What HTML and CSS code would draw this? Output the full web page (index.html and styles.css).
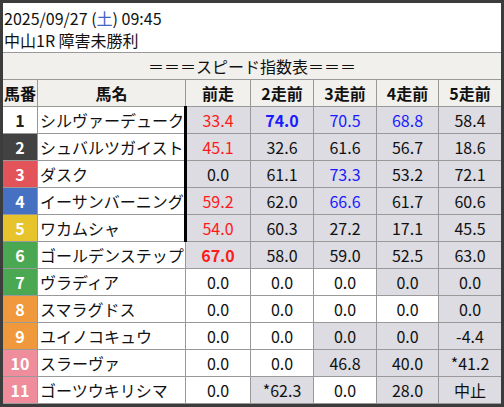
FILE: index.html
```html
<!DOCTYPE html>
<html lang="ja">
<head>
<meta charset="utf-8">
<link rel="stylesheet" href="styles.css">
</head>
<body>
<div class="frame">
  <div class="info">
    <div class="info-line">2025/09/27 (<span class="sat">土</span>) 09:45</div>
    <div class="info-line">中山1R 障害未勝利</div>
  </div>
  <div class="band">＝＝＝スピード指数表＝＝＝</div>
  <div class="grid">
    <div class="hd">馬番</div><div class="hd">馬名</div><div class="hd">前走</div><div class="hd">2走前</div><div class="hd">3走前</div><div class="hd">4走前</div><div class="hd">5走前</div>

    <div class="num n1">1</div><div class="name mark">シルヴァーデューク</div><div class="v g red">33.4</div><div class="v g blue b">74.0</div><div class="v g blue">70.5</div><div class="v g blue">68.8</div><div class="v g">58.4</div>

    <div class="num n2">2</div><div class="name mark">シュバルツガイスト</div><div class="v g red">45.1</div><div class="v g">32.6</div><div class="v g">61.6</div><div class="v g">56.7</div><div class="v g">18.6</div>

    <div class="num n3">3</div><div class="name mark">ダスク</div><div class="v g">0.0</div><div class="v g">61.1</div><div class="v g blue">73.3</div><div class="v g">53.2</div><div class="v g">72.1</div>

    <div class="num n4">4</div><div class="name mark">イーサンバーニング</div><div class="v g red">59.2</div><div class="v g">62.0</div><div class="v g blue">66.6</div><div class="v g">61.7</div><div class="v g">60.6</div>

    <div class="num n5">5</div><div class="name mark last">ワカムシャ</div><div class="v g red">54.0</div><div class="v g">60.3</div><div class="v g">27.2</div><div class="v g">17.1</div><div class="v g">45.5</div>

    <div class="num n6">6</div><div class="name">ゴールデンステップ</div><div class="v g red b">67.0</div><div class="v g">58.0</div><div class="v g">59.0</div><div class="v g">52.5</div><div class="v g">63.0</div>

    <div class="num n7">7</div><div class="name">ヴラディア</div><div class="v">0.0</div><div class="v">0.0</div><div class="v">0.0</div><div class="v g">0.0</div><div class="v g">0.0</div>

    <div class="num n8">8</div><div class="name">スマラグドス</div><div class="v">0.0</div><div class="v">0.0</div><div class="v">0.0</div><div class="v">0.0</div><div class="v g">0.0</div>

    <div class="num n9">9</div><div class="name">ユイノコキュウ</div><div class="v">0.0</div><div class="v">0.0</div><div class="v g">0.0</div><div class="v g">0.0</div><div class="v g">-4.4</div>

    <div class="num n10">10</div><div class="name">スラーヴァ</div><div class="v">0.0</div><div class="v">0.0</div><div class="v g">46.8</div><div class="v g">40.0</div><div class="v g">*41.2</div>

    <div class="num n11">11</div><div class="name">ゴーツウキリシマ</div><div class="v">0.0</div><div class="v g">*62.3</div><div class="v">0.0</div><div class="v g">28.0</div><div class="v g">中止</div>
  </div>
</div>
</body>
</html>
```
FILE: styles.css
```css
html, body {
  margin: 0;
  padding: 0;
  background: #fff;
}
body {
  font-family: "Noto Sans CJK JP", "Noto Sans", sans-serif;
  font-size: 16px;
  color: #111;
}
.frame {
  width: 504px;
  height: 407px;
  box-sizing: border-box;
  border: 3px solid #3c3c3c;
  border-left-width: 3px;
  display: flex;
  flex-direction: column;
  background: #999;
}
.info {
  height: 50px;
  box-sizing: border-box;
  padding: 4px 1px 0;
  background: #fff;
  border-bottom: 1px solid #999;
}
.info-line {
  height: 22px;
  line-height: 22px;
  white-space: nowrap;
}
.sat {
  color: #3e64c4;
}
.band {
  height: 26px;
  line-height: 26px;
  text-align: center;
  background: #f1f0ec;
  border-bottom: 1px solid #999;
  white-space: nowrap;
}
.grid {
  display: grid;
  grid-template-columns: 34px 147px 64px 62px 62px 61px 62px;
  grid-template-rows: 26px repeat(11, 26px);
  gap: 1px;
  background: #999;
}
.grid > div {
  line-height: 26px;
  white-space: nowrap;
  background: #fff;
}
.grid > .hd {
  background: #f1f0ec;
  font-weight: bold;
  text-align: center;
}
.num {
  text-align: center;
  font-weight: bold;
  color: #fff;
}
.grid > .n1 { background: #fff; color: #222; }
.grid > .n2 { background: #424242; }
.grid > .n3 { background: #e2545a; }
.grid > .n4 { background: #4670c2; }
.grid > .n5 { background: #e7c42c; }
.grid > .n6, .grid > .n7 { background: #4aa853; }
.grid > .n8, .grid > .n9 { background: #ef993c; }
.grid > .n10, .grid > .n11 { background: #f08d9c; }
.name {
  padding-left: 2px;
  position: relative;
}
.mark::after {
  content: "";
  position: absolute;
  right: -2px;
  top: -1px;
  bottom: -1px;
  width: 3px;
  background: #000;
}
.v {
  text-align: center;
}
.grid > .g {
  background: #dcdce2;
}
.red { color: #ff1a1a; }
.blue { color: #1a1aff; }
.b { font-weight: bold; }
```
